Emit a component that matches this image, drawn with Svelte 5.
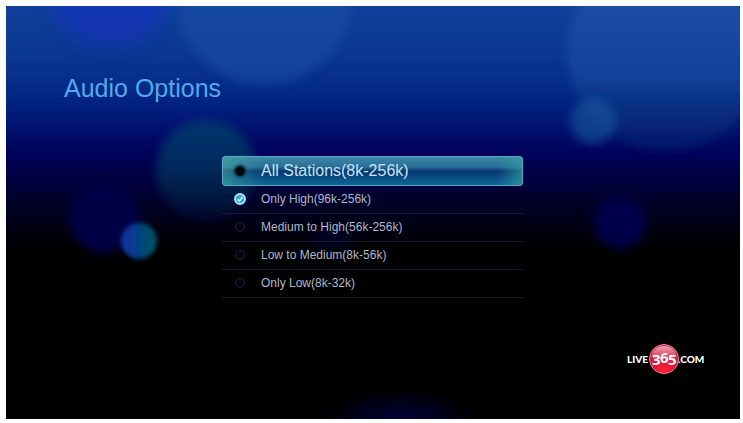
<!--
  @component AudioOptions
  @fileoverview Stream quality picker for the Live365 TV app.

  Shows the list of bitrate ranges over the ambient light backdrop. The row
  with focus gets the glass highlight, the saved choice gets the tick.
-->
<script lang="ts">
  // ===========================================================================
  //  Data
  // ===========================================================================

  const options = [
    { id: 'all', label: 'All Stations(8k-256k)' },
    { id: 'high', label: 'Only High(96k-256k)' },
    { id: 'medium-high', label: 'Medium to High(56k-256k)' },
    { id: 'low-medium', label: 'Low to Medium(8k-56k)' },
    { id: 'low', label: 'Only Low(8k-32k)' }
  ];

  // ===========================================================================
  //  State
  // ===========================================================================

  let selected = $state('high');
  let focused = $state('all');
</script>

<main class="screen">
  <svg class="backdrop" viewBox="0 0 734 413" preserveAspectRatio="none" aria-hidden="true">
    <defs>
      <linearGradient id="sky" x1="0" y1="0" x2="0" y2="1">
        <stop offset="0" stop-color="#0f409b" />
        <stop offset="0.12" stop-color="#0b3890" />
        <stop offset="0.2" stop-color="#042b88" />
        <stop offset="0.28" stop-color="#001674" />
        <stop offset="0.36" stop-color="#00015a" />
        <stop offset="0.45" stop-color="#000033" />
        <stop offset="0.53" stop-color="#000014" />
        <stop offset="0.59" stop-color="#000000" />
      </linearGradient>
      <linearGradient id="teal" x1="0" y1="0" x2="0" y2="1">
        <stop offset="0" stop-color="#04406e" />
        <stop offset="0.5" stop-color="#02345f" />
        <stop offset="1" stop-color="#000a30" />
      </linearGradient>
      <linearGradient id="haze" x1="0" y1="0" x2="0" y2="1">
        <stop offset="0" stop-color="#2558a8" />
        <stop offset="0.6" stop-color="#1648a0" />
        <stop offset="1" stop-color="#021c68" />
      </linearGradient>
      <linearGradient id="orb" x1="0" y1="0" x2="1" y2="0">
        <stop offset="0.2" stop-color="#08349c" />
        <stop offset="0.8" stop-color="#045068" />
      </linearGradient>
      <radialGradient id="glow">
        <stop offset="0" stop-color="#00003c" />
        <stop offset="1" stop-color="#00003c" stop-opacity="0" />
      </radialGradient>
      <filter id="soft" x="-40%" y="-40%" width="180%" height="180%">
        <feGaussianBlur stdDeviation="5" />
      </filter>
      <filter id="crisp" x="-30%" y="-30%" width="160%" height="160%">
        <feGaussianBlur stdDeviation="2" />
      </filter>
      <filter id="wide" x="-40%" y="-40%" width="180%" height="180%">
        <feGaussianBlur stdDeviation="10" />
      </filter>
    </defs>
    <rect width="734" height="413" fill="url(#sky)" />
    <circle cx="104" cy="-20" r="60" fill="#1533bd" opacity="0.75" filter="url(#wide)" />
    <circle cx="258" cy="-8" r="87" fill="#1b51a8" opacity="0.5" filter="url(#soft)" />
    <circle cx="660" cy="46" r="99" fill="url(#haze)" opacity="0.75" filter="url(#soft)" />
    <circle cx="587" cy="115" r="23" fill="#15559b" opacity="0.65" filter="url(#soft)" />
    <circle cx="200" cy="164" r="50" fill="url(#teal)" opacity="0.8" filter="url(#soft)" />
    <circle cx="98" cy="212" r="35" fill="#00004c" opacity="0.9" filter="url(#soft)" />
    <circle cx="133" cy="235" r="18" fill="url(#orb)" filter="url(#crisp)" />
    <circle cx="614" cy="217" r="26" fill="#000050" opacity="0.9" filter="url(#soft)" />
    <ellipse cx="326" cy="233" rx="30" ry="18" fill="url(#glow)" opacity="0.7" />
    <ellipse cx="394" cy="416" rx="78" ry="34" fill="url(#glow)" />
  </svg>

  <h1 class="title">Audio Options</h1>

  <div class="body">
    <div class="options" role="radiogroup" aria-label="Audio Options">
      {#each options as option (option.id)}
        <label class="option" class:focused={focused === option.id}>
          <span class="mark">
            <input
              type="radio"
              name="quality"
              value={option.id}
              bind:group={selected}
              onfocus={() => (focused = option.id)}
            />
            {#if selected === option.id}
              <svg class="tick" viewBox="0 0 12 12" aria-hidden="true">
                <path d="M3.6 6.4 5.4 8 8.600 4" />
              </svg>
            {/if}
          </span>
          <span>{option.label}</span>
        </label>
      {/each}
    </div>
  </div>

  <footer class="footer">
    <svg class="logo" viewBox="0 0 78 32" role="img" aria-label="Live365.com">
      <defs>
        <radialGradient id="ball" cx="0.5" cy="0.85" r="0.8">
          <stop offset="0" stop-color="#ff2038" />
          <stop offset="0.5" stop-color="#dc1234" />
          <stop offset="1" stop-color="#b8274a" />
        </radialGradient>
        <linearGradient id="shine" x1="0" y1="0" x2="0" y2="1">
          <stop offset="0" stop-color="#f6b4c0" stop-opacity="0.9" />
          <stop offset="1" stop-color="#e86078" stop-opacity="0.4" />
        </linearGradient>
      </defs>
      <circle cx="38" cy="16" r="14.5" fill="url(#ball)" stroke="#ee8292" />
      <path d="M25.5 14C26 7 31 3 38 3s12 4 12.500 11c-5 3-9 1-13 2s-8 1-12-2z" fill="url(#shine)" />
      <text class="word" x="1" y="20">LIVE</text>
      <text class="digits" x="26" y="22">3</text>
      <text class="digits" x="34" y="20">6</text>
      <text class="digits" x="42" y="22">5</text>
      <text class="word" x="52" y="20">.COM</text>
    </svg>
  </footer>
</main>

<style>
  :global(body) {
    margin: 0;
    background: #fff;
  }

  .screen {
    position: relative;
    display: flex;
    flex-direction: column;
    box-sizing: border-box;
    min-height: calc(100vh - 10px);
    margin: 6px 3px 4px 6px;
    background: #000;
    color: #adb9c9;
    font-family: 'Liberation Sans', Arial, sans-serif;
  }

  .backdrop {
    position: absolute;
    inset: 0;
    width: 100%;
    height: 100%;
  }

  .title,
  .body,
  .footer {
    position: relative;
  }

  .title {
    margin: 0;
    padding: 67px 58px 0;
    color: #55a8ea;
    font-size: 25px;
    font-weight: 400;
    line-height: 30px;
  }

  .body {
    display: grid;
    grid-template-columns: 216fr 301fr 217fr;
    padding-top: 53px;
  }

  .options {
    grid-column: 2;
  }

  .option {
    display: grid;
    grid-template-columns: 36px 1fr;
    align-items: center;
    box-sizing: border-box;
    height: 28px;
    border-bottom: 1px solid #181c2e;
    padding: 0 0 2px 3px;
    font-size: 12px;
    white-space: nowrap;
    cursor: pointer;
  }

  .option.focused {
    height: 30px;
    padding: 0 0 0 2px;
    border: 1px solid #57a8c0;
    border-radius: 3px;
    background:
      linear-gradient(90deg, #45a99c99, #2f909000 14%, #2f909000 92%, #35a0a0aa),
      linear-gradient(#3d86a4, #286e98 36%, #07366f 50%, #08437c 64%, #0c6896);
    color: #c9e4f4;
    font-size: 16px;
  }

  .mark {
    display: grid;
    place-items: center;
    width: 30px;
  }

  .mark > * {
    grid-area: 1 / 1;
  }

  input {
    appearance: none;
    box-sizing: border-box;
    width: 10px;
    height: 10px;
    margin: 0;
    border: 1px solid #242433;
    border-radius: 50%;
    outline: none;
    background: #03030e;
  }

  .focused input {
    border-color: #04141f;
    background: #00060c;
    box-shadow: 0 0 3px 1px #04283f;
  }

  input:checked {
    width: 12px;
    height: 12px;
    border: 2px solid #9fe6f6;
    background: #3fa4cc;
  }

  .tick {
    width: 12px;
    height: 12px;
    fill: none;
    stroke: #d4f6fc;
    stroke-width: 1.5;
    pointer-events: none;
  }

  .footer {
    display: flex;
    justify-content: flex-end;
    margin-top: auto;
    padding: 45px 36px 44px;
  }

  .logo {
    width: 78px;
    height: 32px;
  }

  .word,
  .digits {
    fill: #fff;
    font-weight: 900;
  }

  .word {
    font-family: Lato, sans-serif;
    font-size: 10px;
  }

  .digits {
    font-family: 'Open Sans', 'Noto Sans', sans-serif;
    font-size: 15px;
    font-weight: 700;
  }
</style>
